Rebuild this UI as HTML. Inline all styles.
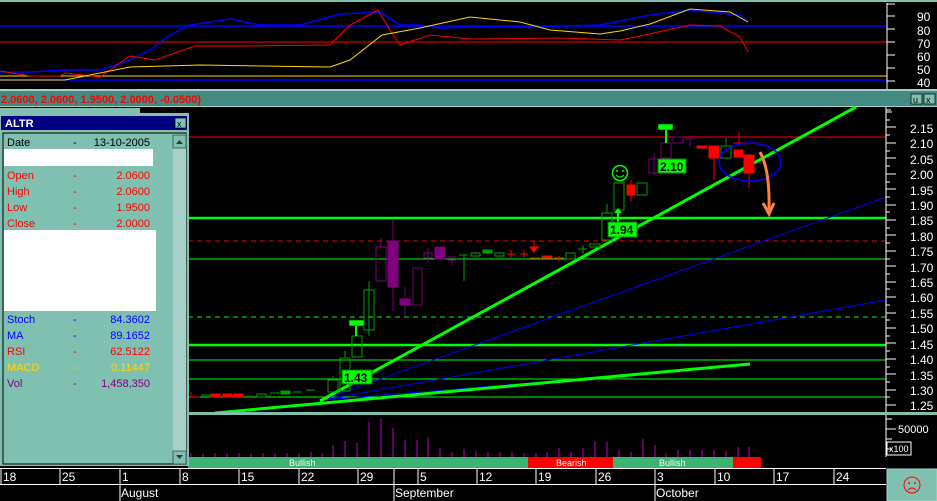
<!DOCTYPE html>
<html><head><meta charset="utf-8"><style>
html,body{margin:0;padding:0;background:#000;width:937px;height:501px;overflow:hidden}
svg{display:block}
text{font-family:"Liberation Sans",sans-serif}
</style></head><body>
<svg width="937" height="501" viewBox="0 0 937 501" xmlns="http://www.w3.org/2000/svg">
<rect width="937" height="501" fill="#000"/>
<!-- top indicator panel -->
<rect x="0" y="0" width="937" height="2" fill="#80c0b0"/>
<line x1="0" y1="26" x2="887" y2="26" stroke="#0000ff" stroke-width="1.5"/>
<line x1="0" y1="42" x2="887" y2="42" stroke="#ff0000" stroke-width="1"/>
<line x1="0" y1="76" x2="887" y2="76" stroke="#ffd700" stroke-width="1"/>
<line x1="0" y1="80" x2="887" y2="80" stroke="#0000ff" stroke-width="1.5"/>
<polyline fill="none" stroke="#0000ff" stroke-width="1.5" points="0,72 30,72 65,70 100,70 125,62 150,50 170,35 190,25 230,19 260,25 300,25 340,14 380,12 400,25 420,25 440,28 470,27 530,27 600,25 650,15 690,10 740,15 748,22"/>
<polyline fill="none" stroke="#ff0000" stroke-width="1" points="0,71 30,76 60,76 65,73 100,77 130,56 155,60 195,46 240,46 330,45 350,25 378,10 390,30 400,45 430,35 470,39 560,38 620,40 640,36 690,25 720,26 740,37 748,52"/>
<polyline fill="none" stroke="#ffd700" stroke-width="1" points="0,80 65,80 130,67 200,65 330,67 350,60 382,35 420,28 470,17 520,22 550,30 600,34 620,31 650,24 690,9 730,12 748,22"/>
<line x1="887" y1="3" x2="887" y2="89" stroke="#fff"/>
<g stroke="#fff">
<line x1="887" y1="4" x2="895" y2="4"/><line x1="887" y1="16" x2="895" y2="16"/><line x1="887" y1="29" x2="895" y2="29"/><line x1="887" y1="42" x2="895" y2="42"/><line x1="887" y1="55" x2="895" y2="55"/><line x1="887" y1="68" x2="895" y2="68"/><line x1="887" y1="81" x2="895" y2="81"/>
</g>
<g fill="#fff" font-size="12">
<text x="917" y="21">90</text><text x="917" y="35">80</text><text x="917" y="48">70</text><text x="917" y="61">60</text><text x="917" y="74">50</text><text x="917" y="87">40</text>
</g>
<!-- teal bar -->
<rect x="0" y="89" width="937" height="2" fill="#a0d0c8"/>
<rect x="0" y="91" width="937" height="15" fill="#448a80"/>
<rect x="0" y="106" width="937" height="1" fill="#a0d0c8"/>
<text x="1" y="103" font-size="11" font-weight="bold" fill="#ff0000">2.0600, 2.0600, 1.9500, 2.0000, -0.0500)</text>
<rect x="911" y="94" width="11" height="10" fill="#80c0b0" stroke="#000" stroke-width="0.7"/>
<rect x="924" y="94" width="11" height="10" fill="#80c0b0" stroke="#000" stroke-width="0.7"/>
<text x="913" y="103" font-size="9" fill="#000">u</text><text x="926" y="103" font-size="9" fill="#000">x</text>

<!-- main chart -->
<g>
<line x1="188" y1="137" x2="886" y2="137" stroke="#ff0000"/>
<line x1="188" y1="218" x2="886" y2="218" stroke="#00ff00" stroke-width="2.5"/>
<line x1="188" y1="241" x2="886" y2="241" stroke="#ff0000" stroke-dasharray="5,4"/>
<line x1="188" y1="259" x2="886" y2="259" stroke="#00ff00"/>
<line x1="188" y1="317" x2="886" y2="317" stroke="#00ff00" stroke-dasharray="5,4"/>
<line x1="188" y1="345" x2="886" y2="345" stroke="#00ff00" stroke-width="2.5"/>
<line x1="188" y1="360" x2="886" y2="360" stroke="#00ff00"/>
<line x1="188" y1="379" x2="886" y2="379" stroke="#00ff00"/>
<line x1="188" y1="397" x2="886" y2="397" stroke="#00ff00"/>
<line x1="322" y1="400" x2="886" y2="197" stroke="#0000ff"/>
<line x1="322" y1="400" x2="886" y2="300" stroke="#0000ff"/>
<line x1="322" y1="400" x2="750" y2="365" stroke="#0000ff"/>
<line x1="320" y1="401" x2="856" y2="107" stroke="#00ff00" stroke-width="3"/>
<line x1="215" y1="413" x2="750" y2="364" stroke="#00ff00" stroke-width="3"/>
</g>
<!-- candles -->
<g stroke-width="1">
<g stroke="#ff0000" fill="#ff0000">
<line x1="190" y1="397" x2="200" y2="397"/><line x1="191" y1="392" x2="191" y2="397"/>
<rect x="211" y="394" width="9" height="3"/><rect x="223" y="394" width="9" height="3"/><rect x="234" y="394" width="9" height="3"/>
<line x1="507" y1="254" x2="516" y2="254"/><line x1="511" y1="250" x2="511" y2="258"/>
<line x1="520" y1="254" x2="528" y2="254"/><line x1="524" y1="250" x2="524" y2="258"/>
<line x1="530" y1="258" x2="540" y2="258"/><rect x="542" y="256" width="10" height="2"/>
<line x1="554" y1="258" x2="564" y2="258"/><line x1="559" y1="256" x2="559" y2="261"/>
<line x1="534" y1="241" x2="534" y2="250"/><polygon points="530,247 538,247 534,252"/>
<rect x="627" y="185" width="8" height="10"/><line x1="631" y1="180" x2="631" y2="201"/>
<rect x="697" y="146" width="10" height="2"/>
<rect x="709" y="146" width="10" height="12"/><line x1="714" y1="158" x2="714" y2="180"/>
<line x1="739" y1="132" x2="739" y2="143"/><line x1="733" y1="143" x2="743" y2="143"/>
<rect x="734" y="150" width="9" height="7"/>
<rect x="744" y="155" width="10" height="18"/><line x1="749" y1="173" x2="749" y2="188"/>
</g>
<g stroke="#00a000" fill="none">
<line x1="201" y1="395" x2="211" y2="395"/><rect x="257" y="394" width="9" height="3"/><line x1="270" y1="393" x2="279" y2="393"/>
<rect x="281" y="391" width="9" height="3" fill="#00a000"/>
<line x1="293" y1="392" x2="302" y2="392"/><line x1="306" y1="390" x2="315" y2="390"/>
<rect x="328" y="380" width="10" height="12"/><line x1="333" y1="376" x2="333" y2="380"/>
<rect x="340" y="358" width="10" height="33"/><line x1="345" y1="351" x2="345" y2="358"/>
<rect x="352" y="336" width="10" height="21"/>
<rect x="364" y="290" width="10" height="40"/><line x1="369" y1="281" x2="369" y2="336"/>
<line x1="459" y1="255" x2="468" y2="255"/><line x1="464" y1="255" x2="464" y2="281"/>
<rect x="471" y="253" width="9" height="3"/><rect x="483" y="250" width="9" height="3" fill="#00a000"/>
<rect x="495" y="253" width="9" height="3"/>
<rect x="566" y="253" width="9" height="6"/>
<line x1="578" y1="249" x2="587" y2="249"/><line x1="583" y1="245" x2="583" y2="254"/>
<rect x="590" y="244" width="10" height="3"/>
<rect x="602" y="213" width="10" height="27"/><line x1="607" y1="204" x2="607" y2="213"/>
<rect x="614" y="183" width="10" height="27"/>
<rect x="637" y="183" width="10" height="12"/>
<rect x="721" y="146" width="10" height="12"/><line x1="726" y1="138" x2="726" y2="146"/>
</g>
<g stroke="#800080" fill="none">
<rect x="376" y="247" width="10" height="34"/><line x1="381" y1="238" x2="381" y2="247"/>
<rect x="388" y="241" width="10" height="46" fill="#800080"/><line x1="393" y1="220" x2="393" y2="311"/>
<rect x="400" y="299" width="10" height="6" fill="#800080"/><line x1="405" y1="287" x2="405" y2="317"/>
<rect x="413" y="268" width="9" height="37"/>
<rect x="424" y="253" width="8" height="5"/><line x1="428" y1="247" x2="428" y2="262"/>
<rect x="435" y="247" width="10" height="12" fill="#800080"/>
<rect x="448" y="257" width="8" height="3"/><line x1="452" y1="260" x2="452" y2="265"/>
<rect x="649" y="159" width="10" height="14"/><line x1="654" y1="153" x2="654" y2="175"/>
<rect x="661" y="143" width="10" height="15"/>
<rect x="673" y="137" width="10" height="6"/>
<line x1="685" y1="139" x2="695" y2="139"/><line x1="690" y1="139" x2="690" y2="147"/>
</g>
</g>
<!-- annotations -->
<ellipse cx="750" cy="162" rx="31" ry="19" fill="none" stroke="#0000ff" stroke-width="1.5"/>
<path d="M760,152 Q770,170 769,210" fill="none" stroke="#ff8040" stroke-width="3"/>
<path d="M763,203 L769,214 L774,203" fill="none" stroke="#ff8040" stroke-width="3"/>
<circle cx="620" cy="173" r="7.5" fill="none" stroke="#00ff00" stroke-width="1.5"/>
<circle cx="617" cy="171" r="1" fill="#00ff00"/><circle cx="623" cy="171" r="1" fill="#00ff00"/>
<path d="M616,175 Q620,179 624,175" fill="none" stroke="#00ff00"/>
<line x1="618" y1="212" x2="618" y2="222" stroke="#00ff00" stroke-width="2"/><polygon points="614,213 622,213 618,208" fill="#00ff00"/>
<g font-size="12" font-weight="bold" fill="#000">
<rect x="658" y="159" width="28" height="14" fill="#00ff00" stroke="#008000"/><text x="660" y="171">2.10</text>
<rect x="608" y="222" width="29" height="15" fill="#00ff00" stroke="#008000"/><text x="610" y="234">1.94</text>
<rect x="342" y="370" width="30" height="14" fill="#00ff00" stroke="#008000"/><text x="344" y="382">1.43</text>
</g>
<rect x="658" y="124" width="15" height="6" fill="#00ff00" stroke="#000" stroke-width="0.5"/><line x1="666" y1="130" x2="666" y2="143" stroke="#00ff00" stroke-width="2"/>
<rect x="349" y="320" width="15" height="6" fill="#00ff00" stroke="#000" stroke-width="0.5"/><line x1="356" y1="326" x2="356" y2="336" stroke="#00ff00" stroke-width="2"/>
<!-- price axis -->
<line x1="886" y1="107" x2="886" y2="412" stroke="#fff"/>
<g fill="#fff" font-size="12">
<text x="910" y="133">2.15</text><text x="910" y="148">2.10</text><text x="910" y="164">2.05</text><text x="910" y="179">2.00</text><text x="910" y="195">1.95</text><text x="910" y="210">1.90</text><text x="910" y="225">1.85</text><text x="910" y="241">1.80</text><text x="910" y="256">1.75</text><text x="910" y="272">1.70</text><text x="910" y="287">1.65</text><text x="910" y="302">1.60</text><text x="910" y="318">1.55</text><text x="910" y="333">1.50</text><text x="910" y="349">1.45</text><text x="910" y="364">1.40</text><text x="910" y="380">1.35</text><text x="910" y="395">1.30</text><text x="910" y="410">1.25</text>
</g>
<g stroke="#fff" stroke-dasharray="1,2.1"><line x1="886" y1="110" x2="891" y2="110"/><line x1="886" y1="110" x2="891" y2="110" stroke-dasharray="none"/></g>
<path d="M886 112 H892 M886 127 H896 M886 143 H896 M886 158 H896 M886 174 H896 M886 189 H896 M886 205 H896 M886 220 H896 M886 235 H896 M886 251 H896 M886 266 H896 M886 282 H896 M886 297 H896 M886 313 H896 M886 328 H896 M886 343 H896 M886 359 H896 M886 374 H896 M886 390 H896 M886 405 H896" stroke="#fff"/>
<line x1="886" y1="110" x2="890" y2="110" stroke="#fff"/>
<path d="M886 120 H890 M886 135 H890 M886 151 H890 M886 166 H890 M886 182 H890 M886 197 H890 M886 212 H890 M886 228 H890 M886 243 H890 M886 259 H890 M886 274 H890 M886 289 H890 M886 305 H890 M886 320 H890 M886 336 H890 M886 351 H890 M886 367 H890 M886 382 H890 M886 397 H890" stroke="#fff"/>
<!-- separator -->
<rect x="188" y="412" width="749" height="3" fill="#80c0b0"/>
<!-- volume -->
<g stroke="#800080" stroke-width="1.5">
<line x1="191" y1="457" x2="191" y2="453"/><line x1="203" y1="457" x2="203" y2="453"/><line x1="215" y1="457" x2="215" y2="453"/><line x1="227" y1="457" x2="227" y2="453"/><line x1="239" y1="457" x2="239" y2="453"/><line x1="251" y1="457" x2="251" y2="453"/><line x1="263" y1="457" x2="263" y2="453"/><line x1="275" y1="457" x2="275" y2="453"/><line x1="287" y1="457" x2="287" y2="453"/><line x1="299" y1="457" x2="299" y2="453"/><line x1="311" y1="457" x2="311" y2="452"/><line x1="322" y1="457" x2="322" y2="453"/><line x1="333" y1="457" x2="333" y2="445"/><line x1="345" y1="457" x2="345" y2="441"/><line x1="357" y1="457" x2="357" y2="443"/><line x1="369" y1="457" x2="369" y2="422"/><line x1="381" y1="457" x2="381" y2="419"/><line x1="393" y1="457" x2="393" y2="428"/><line x1="405" y1="457" x2="405" y2="440"/><line x1="417" y1="457" x2="417" y2="440"/><line x1="428" y1="457" x2="428" y2="437"/><line x1="440" y1="457" x2="440" y2="448"/><line x1="452" y1="457" x2="452" y2="452"/><line x1="464" y1="457" x2="464" y2="449"/><line x1="476" y1="457" x2="476" y2="451"/><line x1="488" y1="457" x2="488" y2="452"/><line x1="500" y1="457" x2="500" y2="452"/><line x1="512" y1="457" x2="512" y2="452"/><line x1="524" y1="457" x2="524" y2="453"/><line x1="536" y1="457" x2="536" y2="453"/><line x1="547" y1="457" x2="547" y2="452"/><line x1="559" y1="457" x2="559" y2="448"/><line x1="571" y1="457" x2="571" y2="452"/><line x1="583" y1="457" x2="583" y2="448"/><line x1="595" y1="457" x2="595" y2="441"/><line x1="607" y1="457" x2="607" y2="442"/><line x1="619" y1="457" x2="619" y2="450"/><line x1="631" y1="457" x2="631" y2="452"/><line x1="643" y1="457" x2="643" y2="439"/><line x1="655" y1="457" x2="655" y2="445"/><line x1="666" y1="457" x2="666" y2="453"/><line x1="678" y1="457" x2="678" y2="450"/><line x1="690" y1="457" x2="690" y2="450"/><line x1="702" y1="457" x2="702" y2="450"/><line x1="714" y1="457" x2="714" y2="450"/><line x1="726" y1="457" x2="726" y2="451"/><line x1="738" y1="457" x2="738" y2="447"/><line x1="749" y1="457" x2="749" y2="447"/>
</g>
<path d="M886 419 H892 M886 429 H896 M886 439 H892 M886 449 H892" stroke="#fff"/>
<line x1="886" y1="415" x2="886" y2="457" stroke="#fff"/>
<text x="898" y="433" font-size="11" fill="#fff">50000</text>
<rect x="887" y="442" width="24" height="13" fill="none" stroke="#fff"/>
<text x="889" y="452" font-size="9" fill="#fff">x100</text>
<!-- sentiment -->
<rect x="188" y="457" width="340" height="12" fill="#3cb371"/>
<rect x="528" y="457" width="85" height="12" fill="#ff0000"/>
<rect x="613" y="457" width="120" height="12" fill="#3cb371"/>
<rect x="733" y="457" width="28" height="12" fill="#ff0000"/>
<g font-size="9" fill="#fff"><text x="289" y="466">Bullish</text><text x="556" y="466">Bearish</text><text x="659" y="466">Bullish</text></g>
<!-- date axis -->
<rect x="0" y="468" width="886" height="1" fill="#fff"/>
<rect x="0" y="484" width="886" height="1" fill="#fff"/>
<rect x="0" y="499" width="886" height="2" fill="#80c0b0" opacity="0"/>
<path d="M1 469 V484 M60 469 V484 M120 469 V501 M180 469 V484 M239 469 V484 M299 469 V484 M358 469 V484 M394 469 V501 M418 469 V484 M477 469 V484 M536 469 V484 M596 469 V484 M655 469 V501 M715 469 V484 M774 469 V484 M834 469 V484" stroke="#fff"/>
<g font-size="12" fill="#fff">
<text x="3" y="481">18</text><text x="62" y="481">25</text><text x="122" y="481">1</text><text x="182" y="481">8</text><text x="241" y="481">15</text><text x="301" y="481">22</text><text x="360" y="481">29</text><text x="420" y="481">5</text><text x="479" y="481">12</text><text x="538" y="481">19</text><text x="598" y="481">26</text><text x="657" y="481">3</text><text x="717" y="481">10</text><text x="776" y="481">17</text><text x="836" y="481">24</text>
<text x="121" y="497">August</text><text x="395" y="497">September</text><text x="656" y="497">October</text>
</g>
<rect x="887" y="469" width="50" height="32" fill="#80c0b0" stroke="#a0d8c8"/>
<circle cx="912" cy="485" r="8" fill="none" stroke="#ff0000"/>
<circle cx="909" cy="483" r="1" fill="#ff0000"/><circle cx="915" cy="483" r="1" fill="#ff0000"/>
<path d="M908,490 Q912,486 916,490" fill="none" stroke="#ff0000"/>
<!-- left panel -->
<rect x="0" y="108" width="140" height="5" fill="#80c0b0"/>
<rect x="0" y="113" width="189" height="353" fill="#80c0b0"/>
<rect x="1" y="116" width="186" height="14" fill="#000080"/>
<text x="5" y="127" font-size="11" font-weight="bold" fill="#fff">ALTR</text>
<rect x="175" y="118" width="11" height="10" fill="#80c0b0" stroke="#000" stroke-width="0.7"/><text x="177" y="127" font-size="9" fill="#000">x</text>
<rect x="3" y="133" width="183" height="331" fill="none" stroke="#000"/>
<rect x="173" y="134" width="13" height="330" fill="#a8d0c8"/>
<rect x="173" y="135" width="13" height="13" fill="#80c0b0" stroke="#204040" stroke-width="0.7"/>
<rect x="173" y="451" width="13" height="13" fill="#80c0b0" stroke="#204040" stroke-width="0.7"/>
<polygon points="176,144 183,144 179.5,140" fill="#204040"/><polygon points="176,455 183,455 179.5,459" fill="#204040"/>
<rect x="4" y="149" width="149" height="17" fill="#fff"/>
<rect x="4" y="230" width="152" height="81" fill="#fff"/>
<g font-size="11">
<text x="7" y="146" fill="#000">Date</text><text x="73" y="146" fill="#000">-</text><text x="150" y="146" fill="#000" text-anchor="end">13-10-2005</text>
<g fill="#ff0000"><text x="7" y="179">Open</text><text x="73" y="179">-</text><text x="150" y="179" text-anchor="end">2.0600</text>
<text x="7" y="195">High</text><text x="73" y="195">-</text><text x="150" y="195" text-anchor="end">2.0600</text>
<text x="7" y="211">Low</text><text x="73" y="211">-</text><text x="150" y="211" text-anchor="end">1.9500</text>
<text x="7" y="227">Close</text><text x="73" y="227">-</text><text x="150" y="227" text-anchor="end">2.0000</text></g>
<g fill="#0000ff"><text x="7" y="323">Stoch</text><text x="73" y="323">-</text><text x="150" y="323" text-anchor="end">84.3602</text>
<text x="7" y="339">MA</text><text x="73" y="339">-</text><text x="150" y="339" text-anchor="end">89.1652</text></g>
<g fill="#ff0000"><text x="7" y="355">RSI</text><text x="73" y="355">-</text><text x="150" y="355" text-anchor="end">62.5122</text></g>
<g fill="#ffd700"><text x="7" y="371">MACD</text><text x="73" y="371">-</text><text x="150" y="371" text-anchor="end">0.11447</text></g>
<g fill="#800080"><text x="7" y="387">Vol</text><text x="73" y="387">-</text><text x="150" y="387" text-anchor="end">1,458,350</text></g>
</g>
</svg>
</body></html>
